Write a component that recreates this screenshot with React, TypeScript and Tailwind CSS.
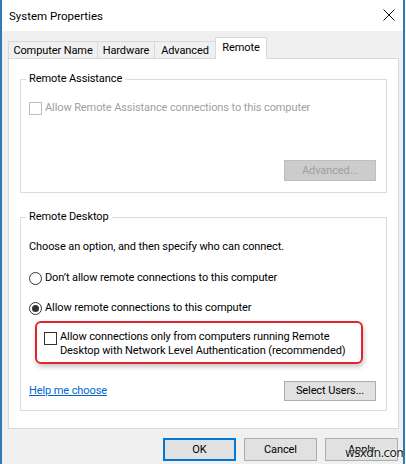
import React from "react";

const font = { fontFamily: 'Roboto, "Noto Sans", sans-serif' };

function Checkbox({ disabled }: { disabled?: boolean }) {
  return (
    <div
      className={
        "w-[13px] h-[13px] shrink-0 border bg-white " +
        (disabled ? "border-[#bcbcbc]" : "border-[#333333]")
      }
    />
  );
}

function Radio({ checked }: { checked?: boolean }) {
  return (
    <div className="w-[13px] h-[13px] shrink-0 rounded-full border border-[#333333] bg-white flex items-center justify-center">
      {checked && <div className="w-[7px] h-[7px] rounded-full bg-[#333333]" />}
    </div>
  );
}

function Btn({
  children,
  w,
  disabled,
  primary,
}: {
  children: React.ReactNode;
  w: string;
  disabled?: boolean;
  primary?: boolean;
}) {
  let cls = "flex items-center justify-center shrink-0 whitespace-nowrap ";
  if (disabled) cls += "bg-[#cccccc] border border-[#bfbfbf] text-[#a0a0a0] ";
  else if (primary) cls += "bg-[#e1e1e1] border-2 border-[#0078d7] text-black ";
  else cls += "bg-[#e1e1e1] border border-[#adadad] text-black ";
  return <div className={cls + w}>{children}</div>;
}

export default function App() {
  return (
    <div
      className="w-[406px] h-[464px] bg-white text-[11px] leading-[14px] tracking-[-0.1px] text-black whitespace-nowrap"
      style={font}
    >
      <div className="w-[405px] h-[464px] border-l-2 border-r-2 border-[#2e7bb8] bg-[#f0f0f0] flex flex-col overflow-hidden relative">
        {/* Title bar */}
        <div className="h-[31px] bg-white flex items-center justify-between pl-[7px] pr-[8px] shrink-0">
          <span className="text-[11.5px] tracking-normal">System Properties</span>
          <svg width="12" height="12" viewBox="0 0 12 12" className="mt-[-1px]">
            <path d="M0.5 0.5 L11.5 11.5 M11.5 0.5 L0.5 11.5" stroke="#111" strokeWidth="1" fill="none" />
          </svg>
        </div>

        {/* Tabs */}
        <div className="h-[27px] flex items-end pl-[6px] shrink-0">
          <div className="w-[90px] h-[17px] border border-b-0 border-[#d9d9d9] bg-[#f0f0f0] flex items-center justify-center pt-[1px]">
            Computer Name
          </div>
          <div className="w-[58px] h-[17px] -ml-px border border-b-0 border-[#d9d9d9] bg-[#f0f0f0] flex items-center justify-center pt-[1px]">
            Hardware
          </div>
          <div className="w-[62px] h-[17px] -ml-px border border-b-0 border-[#d9d9d9] bg-[#f0f0f0] flex items-center justify-center pt-[1px]">
            Advanced
          </div>
          <div className="w-[52px] h-[22px] -ml-px -mb-px relative z-10 border border-b-0 border-[#d9d9d9] bg-white flex items-start justify-center pt-[3px]">
            Remote
          </div>
        </div>

        {/* Panel */}
        <div className="ml-[6px] w-[391px] h-[371px] border border-[#d9d9d9] bg-white flex flex-col px-[11px] pt-[13px] shrink-0">
          {/* Remote Assistance */}
          <fieldset className="border border-[#dcdcdc] pl-[5px] pr-[10px] pb-[11px]">
            <legend className="px-[3px] leading-[14px]">Remote Assistance</legend>
            <div className="flex flex-col pl-[3px]">
              <div className="mt-[15px] h-[14px] flex items-center gap-[3px] text-[#a0a0a0]">
                <Checkbox disabled />
                <span>Allow Remote Assistance connections to this computer</span>
              </div>
              <div className="mt-[45px] flex justify-end">
                <Btn w="w-[92px] h-[21px]" disabled>
                  Advanced...
                </Btn>
              </div>
            </div>
          </fieldset>

          {/* Remote Desktop */}
          <fieldset className="mt-[17px] border border-[#dcdcdc] pl-[5px] pr-[10px] pb-[9px]">
            <legend className="px-[3px] leading-[14px]">Remote Desktop</legend>
            <div className="flex flex-col pl-[3px]">
              <div className="mt-[16px] h-[14px]">Choose an option, and then specify who can connect.</div>
              <div className="mt-[17px] h-[14px] flex items-center gap-[3px]">
                <Radio />
                <span>Don’t allow remote connections to this computer</span>
              </div>
              <div className="mt-[16px] h-[14px] flex items-center gap-[3px]">
                <Radio checked />
                <span>Allow remote connections to this computer</span>
              </div>
              <div className="mt-[6px] ml-[6px] w-[328px] h-[43px] border-2 border-[#e0242b] rounded-[6px] shadow-[1px_3px_5px_rgba(0,0,0,0.22)] flex items-start gap-[3px] pl-[7px] pt-[7px]">
                <div className="mt-[2px]">
                  <Checkbox />
                </div>
                <div className="leading-[14px]">
                  Allow connections only from computers running Remote
                  <br />
                  Desktop with Network Level Authentication (recommended)
                </div>
              </div>
              <div className="mt-[17px] flex items-center justify-between">
                <span className="text-[#0066cc] underline">Help me choose</span>
                <Btn w="w-[92px] h-[20px]">Select Users...</Btn>
              </div>
            </div>
          </fieldset>
        </div>

        {/* Bottom buttons */}
        <div className="mt-[9px] flex justify-end gap-[8px] pr-[5px]">
          <Btn w="w-[73px] h-[23px]" primary>
            OK
          </Btn>
          <Btn w="w-[73px] h-[23px]">Cancel</Btn>
          <Btn w="w-[73px] h-[23px]">Apply</Btn>
        </div>

        {/* watermark */}
        <div
          className="absolute left-[343px] top-[446px] text-[12px] leading-[14px] text-[#1a1a1a]"
          style={{ fontFamily: '"DejaVu Sans", sans-serif', textShadow: "0 0 2px #fff, 0 0 2px #fff", letterSpacing: "-0.6px" }}
        >
          wsxdn.com
        </div>
      </div>
    </div>
  );
}
